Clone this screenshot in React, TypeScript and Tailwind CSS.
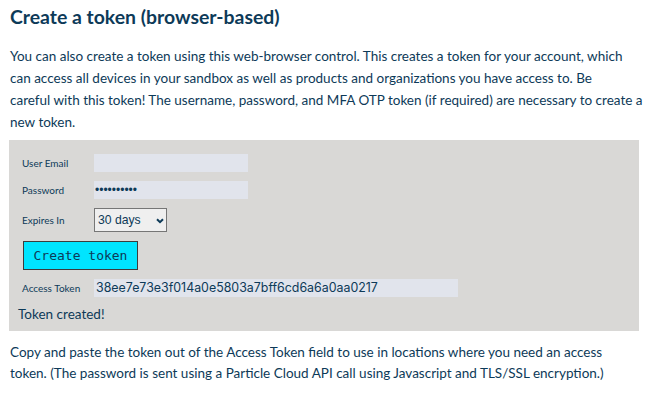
export default function App() {
  return (
    <div className="min-h-screen bg-white px-[10px] text-[#0d3a58]" style={{ fontFamily: "Lato, 'Open Sans', sans-serif" }}>
      <h2 className="pt-[5px] text-[19.4px] font-bold leading-[24px]">Create a token (browser-based)</h2>

      <p className="mt-[16px] text-[13.5px] leading-[22px]">
        You can also create a token using this web-browser control. This creates a token for your account, which
        <br />
        can access all devices in your sandbox as well as products and organizations you have access to. Be
        <br />
        careful with this token! The username, password, and MFA OTP token (if required) are necessary to create a
        <br />
        new token.
      </p>

      {/* ── Token form ─────────────────────────────────────────── */}
      <div className="-ml-px mt-[7px] h-[191px] w-[630px] bg-[#d9d8d6] px-[13px] pt-[14px]">
        <div className="flex flex-col gap-[9px]">
          <div className="flex h-[18px] items-center">
            <span className="w-[72px] text-[10px]">User Email</span>
            <input className="h-[18px] w-[154px] bg-[#e1e4ec] outline-none" />
          </div>
          <div className="flex h-[18px] items-center">
            <span className="w-[72px] text-[10px]">Password</span>
            <div
              className="flex h-[18px] w-[154px] items-center bg-[#e1e4ec] px-[1px] text-[12px] text-[#0d3a58]"
              style={{ fontFamily: "'Liberation Sans', Arial, sans-serif" }}
            >
              ••••••••••
            </div>
          </div>
          <div className="flex h-[24px] items-center">
            <span className="w-[72px] text-[10px]">Expires In</span>
            <div className="relative h-[24px] w-[73px] border border-[#767676] bg-[#efefef]">
              <span className="absolute left-[3px] top-[3px] text-[12.2px] leading-[16px]" style={{ fontFamily: "'Liberation Sans', Arial, sans-serif" }}>
                30 days
              </span>
              <svg className="absolute right-[2px] top-[9px]" width="8" height="6" viewBox="0 0 8 6">
                <path d="M1 1.2 L4 4.2 L7 1.2" fill="none" stroke="#0d3a58" strokeWidth="2" />
              </svg>
            </div>
          </div>
          <div className="flex">
            <button
              className="ml-px h-[29px] w-[115px] border border-[#3c3c3c] bg-[#00e5ff] text-[13px] text-[#0d3a58]"
              style={{ fontFamily: "'DejaVu Sans Mono', monospace" }}
            >
              Create token
            </button>
          </div>
          <div className="flex h-[18px] items-center">
            <span className="w-[72px] text-[10px]">Access Token</span>
            <div className="flex h-[18px] w-[364px] items-center bg-[#e1e4ec] px-[2px] text-[12.4px]" style={{ fontFamily: "Inter, sans-serif" }}>
              38ee7e73e3f014a0e5803a7bff6cd6a6a0aa0217
            </div>
          </div>
        </div>
        <p className="ml-[-4px] mt-[8px] text-[13.5px] leading-[18px]">Token created!</p>
      </div>

      <p className="mt-[11px] text-[13.5px] leading-[21px]">
        Copy and paste the token out of the Access Token field to use in locations where you need an access
        <br />
        token. (The password is sent using a Particle Cloud API call using Javascript and TLS/SSL encryption.)
      </p>
    </div>
  );
}
